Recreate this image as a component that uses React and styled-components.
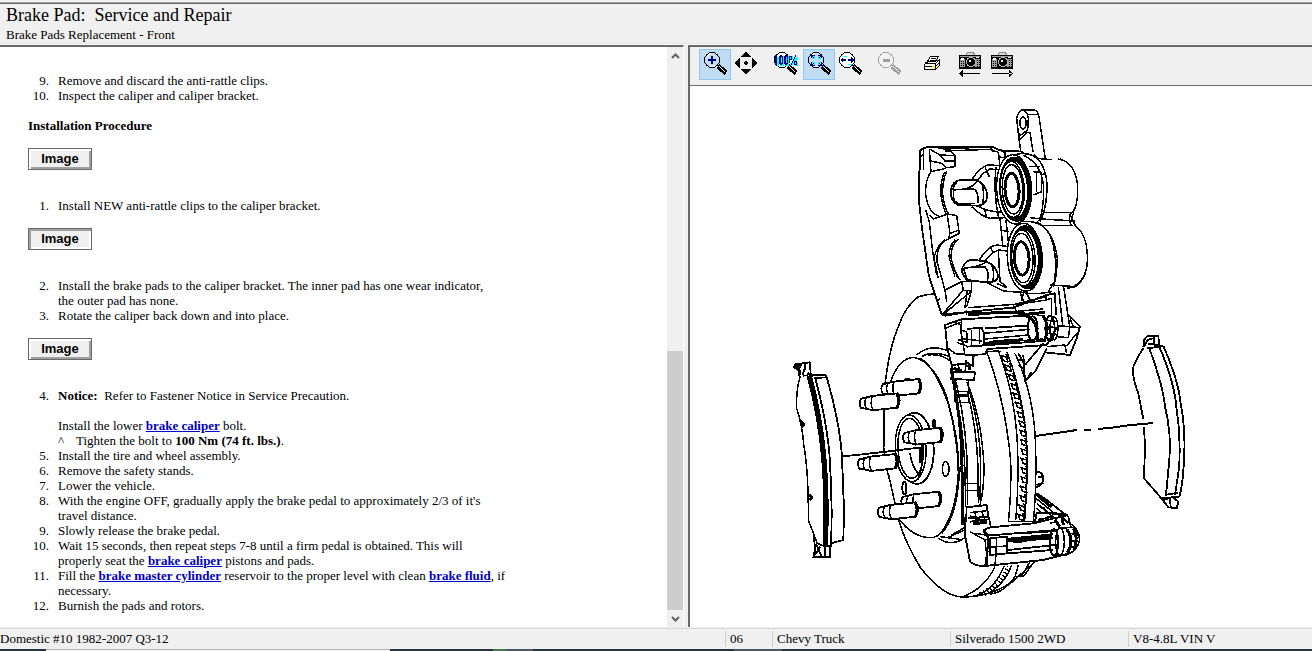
import styled, { createGlobalStyle } from "styled-components";

export default function App() {
  return (
    <Page>
      <GlobalStyle />
      <Header>
        <Title>Brake Pad:&nbsp; Service and Repair</Title>
        <Subtitle>Brake Pads Replacement - Front</Subtitle>
      </Header>

      <Panes>
        <TextPane>
          <Article>
            {procedure.map((block, index) => (
              <Block key={index} block={block} />
            ))}
          </Article>
          <ScrollBar>
            <ScrollButton type="button" aria-label="Scroll up">
              <Chevron viewBox="0 0 9 6">
                <path d="M1 5 4.500 1.500 8 5" />
              </Chevron>
            </ScrollButton>
            <Track>
              <Thumb />
            </Track>
            <ScrollButton type="button" aria-label="Scroll down">
              <Chevron viewBox="0 0 9 6">
                <path d="M1 1 4.500 4.500 8 1" />
              </Chevron>
            </ScrollButton>
          </ScrollBar>
        </TextPane>

        <ImagePane>
          <Toolbar />
          <Canvas>
            <BrakeDiagram />
          </Canvas>
        </ImagePane>
      </Panes>

      <StatusBar>
        <Status>Domestic #10 1982-2007 Q3-12</Status>
        <Status>06</Status>
        <Status>Chevy Truck</Status>
        <Status>Silverado 1500 2WD</Status>
        <Status>V8-4.8L VIN V</Status>
      </StatusBar>
      <Taskbar>
        <Task $w={46} $color="#22353f" />
        <Task $w={344} $color="#f0f0f0" $line />
        <Task $w={103} $color="#22353f" />
        <Task $w={14} $color="#41794b" />
        <Task $w={26} $color="#4a565e" />
        <Task $w={201} $color="#22353f" />
        <Task $w={48} $color="#4a565e" />
      </Taskbar>
    </Page>
  );
}

function Block({ block }) {
  if (block.type === "heading") return <Heading>{block.text}</Heading>;
  if (block.type === "image") {
    return (
      <ImageButton type="button" $pressed={block.pressed}>
        Image
      </ImageButton>
    );
  }
  return (
    <Steps>
      {block.items.map((item) => (
        <Step key={item.no}>
          <StepNumber>{item.no}.</StepNumber>
          <div>{item.body}</div>
        </Step>
      ))}
    </Steps>
  );
}

function Toolbar() {
  return (
    <Tools>
      <ToolGroup>
        <Tool type="button" aria-label="Zoom in" $active>
          <Magnifier x={13} tint="#c3dcf3">
            <path d="M9 11h8M13 7v8" stroke="#000080" strokeWidth="2" />
          </Magnifier>
        </Tool>
        <Tool type="button" aria-label="Pan">
          <Icon viewBox="0 0 32 31">
            <path d="M15 3l6 5H9zM15 25l6-5H9zM4 14l5-6v12zM26 14l-5-6v12zM14 12h2v1h1v2h-1v1h-2v-1h-1v-2h1z" />
          </Icon>
        </Tool>
      </ToolGroup>
      <ToolGroup>
        <Tool type="button" aria-label="Actual size">
          <Magnifier x={11}>
            <path
              d="M5 8h3v9H6zM9 7h4v10H9zM14 7h4v10h-4zM19 7h3v4h-3zM25 8h2v2l-5 6h-2zM24 13h3v4h-3z"
              fill="#00ffff"
            />
            <path
              fillRule="evenodd"
              fill="#000080"
              d="M3 8V7h1V6h2v10H4V8zM8 7h1V6h2v1h1v8h-1v1H9v-1H8zM9.500 8v6h1V8zM13 7h1V6h2v1h1v8h-1v1h-2v-1h-1zM14.500 8v6h1V8zM18 7h3v4h-3zM19 8v2h1V8zM24 6h1v2h-1v2h-1v2h-1v2h-1v2h-1v-2h1v-2h1v-2h1V8h1zM23 12h3v4h-3zM24 13v2h1v-2z"
            />
          </Magnifier>
        </Tool>
        <Tool type="button" aria-label="Fit to window" $active>
          <Magnifier x={13} tint="#c3dcf3">
            <path
              d="M9 9.500h2.500V7M15.500 7v2.500H18M9 13.500h2.500V16M18 13.500h-2.500V16"
              fill="none"
              stroke="#00ffff"
              strokeWidth="1"
            />
            <path
              d="M8.500 9V6.500h3M15 6.500h3.500V9M8.500 13v3.500h3M18.500 13v3.500H15M9 7l2 2M18 7l-2 2M9 16l2-2M18 16l-2-2"
              fill="none"
              stroke="#000080"
              strokeWidth="1"
            />
          </Magnifier>
        </Tool>
        <Tool type="button" aria-label="Fit width">
          <Magnifier x={12}>
            <path d="M8 7h4M13 15h4" stroke="#00ffff" strokeWidth="1" />
            <path
              d="M5 11l3-3v2h3v2H8v2zM19 11l-3-3v2h-3v2h3v2z"
              fill="#000080"
            />
          </Magnifier>
        </Tool>
      </ToolGroup>
      <ToolGroup>
        <Tool type="button" aria-label="Zoom out" disabled>
          <Magnifier x={11} color="#a0a0a0" tint="#f0f0f0">
            <path d="M8 11h7" stroke="#a0a0a0" strokeWidth="3" />
          </Magnifier>
        </Tool>
      </ToolGroup>
      <ToolGroup>
        <Tool type="button" aria-label="Print">
          <Icon viewBox="0 0 32 31">
            <path
              d="M9.500 14.500l4-2h8l3-2v6l-4 4h-11z"
              fill="#fff"
              stroke="#000"
            />
            <path
              d="M12.500 12.500l3-5h8l-3 5zM9.500 17.500h11l4-4M20.500 14.500v6M9.500 14.500h11l3-3"
              fill="#fff"
              stroke="#000"
            />
            <path d="M15.500 9.500h5M14.500 11.500h5" stroke="#000" />
            <path d="M17 17h3v2h-3z" fill="#f2e600" />
          </Icon>
        </Tool>
      </ToolGroup>
      <ToolGroup>
        <Tool type="button" aria-label="Previous image">
          <Camera>
            <path d="M5 24h20v1H5zM4 24.500l4-3.500v7z" />
          </Camera>
        </Tool>
        <Tool type="button" aria-label="Next image">
          <Camera>
            <path d="M5 24h20v1H5zM26 24.500l-4-3.500v7z" />
          </Camera>
        </Tool>
      </ToolGroup>
    </Tools>
  );
}

function Magnifier({ x, color = "#000", tint = "#fff", children }) {
  return (
    <Icon viewBox="0 0 32 31">
      <circle cx={x} cy="11" r="7.500" fill={tint} stroke={color} />
      <path
        d="M-5-3q1-3 4-3.500M4 5q-3 2-6 1"
        transform={`translate(${x} 11)`}
        fill="none"
        stroke="#fff"
      />
      <g transform={`translate(${x - 13} 0)`}>
        <path d="M19 17l8 7" stroke={color} strokeWidth="5" />
        <path d="M20 17l6 6" stroke="#f0f0f0" strokeWidth="1" />
      </g>
      {children}
    </Icon>
  );
}

function Camera({ children }) {
  return (
    <Icon viewBox="0 0 32 31">
      <path d="M11 6q0-3 4-3t5 3z" fill="#d8d8d8" stroke="#888" />
      <path d="M4 6h22v14H4z" />
      <path d="M5 7h20v1H5zM5 10h5v8H5zM20 10h5v8h-5z" fill="#a0a0a0" />
      <path
        d="M6.500 8v10M8.500 8v10M22.500 9v9M24.500 9v9"
        stroke="#000"
        strokeDasharray="1 1"
      />
      <circle cx="16" cy="13" r="5" fill="#b8b8b8" />
      <circle cx="16" cy="13" r="4" />
      <path d="M14 11h2v2h-2zM6 9h3v2H6zM21 8h3v1h-3z" fill="#fff" />
      {children}
    </Icon>
  );
}

const studs = [
  [110, 147],
  [45, 190],
  [175, 293],
  [40, 372],
  [170, 485],
  [100, 517],
];

// cooling vanes between the two rotor faces
const vanes = [
  [456, 50], [466, 78], [476, 106], [484, 134], [491, 162], [498, 190],
  [503, 218], [508, 246], [511, 274], [513, 302], [515, 330], [515, 358],
  [515, 386], [515, 414], [513, 442], [511, 470], [508, 498], [505, 526],
];

// each group is drawn at three times its size on the canvas
function BrakeDiagram() {
  return (
    <Diagram viewBox="690 86 622 541" role="img" aria-label="Front brake pads">
      {/* rotor rim */}
      <path d="M935 294Q926 294 918 297 905 307 899 325 888 350 884 395V447Q885 470 897 503L898 518Q904 540 920 567 942 596 962 597 990 597 1012 582L1036 561" />

      {/* hub */}
      <g transform="translate(850 340) scale(.3333)">
        <path d="M200 45Q240 8 300 35M215 50Q250 30 300 50M235 45Q270 40 300 62" />
        <path
          className="paper"
          d="M103 320V200L120 130Q145 55 190 52 250 62 290 170 325 300 325 400 318 520 275 575 262 592 245 593 190 595 145 535L115 400"
        />
        <path className="heavy" d="M210 55Q255 80 295 190 330 310 326 420 318 530 275 580" />
        <ellipse className="heavy" cx="197" cy="325" rx="54" ry="107" transform="rotate(-3 197 325)" />
        <ellipse className="paper" cx="182" cy="325" rx="46" ry="100" transform="rotate(-3 182 325)" />
        <ellipse cx="182" cy="325" rx="38" ry="90" transform="rotate(-3 182 325)" />
        <path d="M215 310Q225 370 205 415M180 340Q185 380 208 405" />
        <path className="bold" d="M212 322L213 370" />
        <ellipse cx="287" cy="387" rx="10" ry="22" />
        <ellipse className="heavy" cx="163" cy="445" rx="6" ry="19" />
        <ellipse className="heavy" cx="252" cy="250" rx="3" ry="12" />
        <ellipse className="heavy" cx="172" cy="119" rx="6" ry="3" />
        <path className="heavy" d="M-22 349L20 345 100 336 215 322" />
        {studs.map(([x, y]) => (
          <g key={`${x}-${y}`} transform={`translate(${x} ${y})`}>
            <path
              className="paper heavy"
              d="M-12-14Q-20-2-12 14L12 18 22 21 98 13Q110-10 98-30L20-22 5-18Z"
            />
            <path d="M5-18Q-6 0 5 16M22-22Q14 0 24 20M94-28Q104-8 94 12" />
          </g>
        ))}
      </g>

      {/* inner shield and rotor faces */}
      <g transform="translate(850 340) scale(.3333)">
        <path
          className="paper"
          d="M410 35Q465 180 482 360 485 460 475 545L550 545Q560 450 557 330 555 160 490 30Z"
        />
        <path d="M446 35Q498 170 503 330 506 450 497 540" />
        <path d="M470 33Q526 180 532 340 531 460 524 540" />
        {vanes.map(([x, y]) => (
          <path
            key={y}
            d={`M${x - 4} ${y - 4}l18 6 4 14-14-4-4-14M${x + 12} ${y - 8}l6 12`}
          />
        ))}
        <path className="bold" d="M303 85Q338 250 336 390L338 555" />
        <path d="M312 140Q346 280 346 450V500M318 125Q355 280 352 430V495" />
        <path d="M350 125Q395 230 402 380 402 450 390 495M352 155Q380 260 384 380L385 490M358 150Q392 270 392 380L390 480" />
        <path d="M320 165H356M320 187H360M346 430H385M346 452H385M316 125L318 165M345 500H385" />
      </g>

      {/* caliper plate */}
      <g transform="translate(890 95) scale(.3333)">
        <path
          className="paper"
          d="M90 168Q95 155 130 154L160 156V162L305 155 330 166 345 172 345 640 156 658 116 540 96 400 86 310Z"
        />
        <path className="heavy" d="M90 168Q95 156 130 155L160 156 305 155 330 166 432 172" />
        <path d="M165 168L300 163 325 172M300 155L310 172" />
        <path className="heavy" d="M90 165L86 310 96 400 116 540 155 658" />
        <path d="M100 160V225M98 180Q89 182 90 200V225M118 162L123 230Q105 255 107 300 115 355 150 365L172 358" />
        <path d="M123 230L160 222 168 218M170 228Q156 260 158 300 165 345 176 356M164 230Q150 260 153 300 160 345 170 358" />
        <path d="M120 163L150 180 195 182V215L168 218 155 205 122 198M150 180L165 198H195M130 156L180 165 195 182" />
        <path d="M107 345L118 380 128 470 140 540M118 360L130 372 172 357 200 362 208 415 175 432Q140 445 132 490M172 360L180 415 208 405M180 415L175 432" />
        <path d="M205 432Q182 450 183 490L203 550M196 434Q175 455 178 490L195 545M165 435Q138 460 141 500L165 585M130 480L145 550" />
      </g>

      {/* caliper lug */}
      <g transform="translate(890 95) scale(.3333)">
        <path
          className="paper"
          d="M392 168L385 115 380 70Q385 46 400 44L438 46Q447 55 450 85L466 192 430 195Z"
        />
        <path d="M400 44Q415 55 415 72L413 105 386 125M390 132L413 112 420 112 429 170M413 58H440M388 122L384 105" />
        <ellipse className="heavy" cx="399" cy="84" rx="9" ry="18" />
      </g>

      {/* piston bores */}
      <g transform="translate(890 95) scale(.3333)">
        <path
          className="blank"
          d="M370 180Q420 172 440 190H510Q555 205 563 270 565 330 548 352L555 392Q595 420 592 500 585 570 520 585L330 640V400L300 300Z"
        />
        <path d="M370 180Q415 168 440 190L485 194M510 192Q555 205 563 270 565 330 548 352M505 192L520 196M432 180Q478 220 470 300 466 350 450 380M400 180Q462 210 461 290 460 350 447 378" />
        <path d="M418 215H450M430 230L455 232 455 290 430 300M440 235V290M455 240L465 236M420 368L455 372 555 378M460 352H550M460 392H550M545 350Q532 370 545 392M552 350L545 370 556 392" />
        <path d="M555 392Q595 420 592 500 588 560 550 578M400 380Q455 375 480 420 505 480 493 560L475 590M440 380Q492 410 502 490 500 550 490 575" />
        <path d="M325 170L330 212M345 172L350 200M325 185L360 192M330 370L338 450M348 375L356 450M330 405L356 410" />
        <path d="M245 255Q270 215 295 210L340 212M262 258Q278 232 300 222L335 225M245 335Q275 365 300 370L345 368M262 332Q290 350 335 352M285 218L298 245M283 342L290 366M318 215Q310 290 325 365" />
        <path d="M262 505Q290 455 320 450L358 455M280 510Q295 475 325 465L352 468M300 455L310 475M325 465L330 560 350 575" />
        <path
          className="paper heavy"
          d="M182 290Q185 257 215 254L260 256Q290 268 292 305 288 330 265 332L205 330Q182 320 182 290Z"
        />
        <path d="M190 285L225 282Q250 275 262 258M190 285L192 320M225 282H250Q266 285 264 325M200 262Q192 270 188 285M275 262Q284 290 278 328M192 318L205 325H255" />
        <path
          className="paper heavy"
          d="M215 530Q218 500 245 494L290 500Q320 512 325 545 322 562 290 562L230 555Z"
        />
        <path d="M222 520L250 516Q278 510 290 500M250 516H285Q300 530 292 560M220 520L232 553M305 510Q315 530 308 560" />
        <g transform="rotate(-3 370 283)">
          <ellipse className="paper" cx="372" cy="283" rx="52" ry="104" />
          <ellipse className="ring" cx="377" cy="283" rx="42" ry="90" />
          <ellipse className="paper" cx="367" cy="283" rx="36" ry="84" />
          <ellipse cx="368" cy="283" rx="31" ry="74" />
          <ellipse className="bold" cx="366" cy="285" rx="21" ry="50" />
        </g>
        <g transform="rotate(-3 400 487)">
          <ellipse className="paper" cx="404" cy="487" rx="52" ry="102" />
          <ellipse className="ring" cx="409" cy="487" rx="42" ry="88" />
          <ellipse className="paper" cx="398" cy="489" rx="37" ry="84" />
          <ellipse cx="397" cy="489" rx="32" ry="74" />
          <ellipse className="bold" cx="395" cy="490" rx="22" ry="50" />
        </g>
      </g>

      {/* upper bracket */}
      <g transform="translate(890 265) scale(.3333)">
        <path
          className="blank"
          d="M165 180L215 163 410 152 500 150 535 150 570 185 560 215 540 270 465 262 435 320 405 350 400 270 290 250 255 270V345L190 345 172 250Z"
        />
        <path d="M165 75L215 50H245V78L160 148M215 50L220 75 160 145M165 75L170 110M215 75L245 78M185 0L210 45M150 100Q135 110 150 125" />
        <path className="heavy" d="M155 148L165 152 240 140 370 128 470 90 495 85 498 150" />
        <path d="M235 128L375 118 468 95M230 135L230 150M225 128L232 75M245 76L230 125M235 152L460 132M370 120L380 140M468 92V105L485 100V150M380 118L470 105" />
        <path className="bold" d="M235 146L370 142 410 148 465 142" />
        <path d="M290 52L340 78 390 82 400 108M388 80Q430 92 485 80M320 55L350 68M480 60L560 65M530 70Q575 65 590 10M520 60L540 190M505 65L518 180M400 85L395 108M410 85L420 105" />
        <path className="heavy" d="M535 150L570 185 560 220 540 270 465 262" />
        <path d="M540 185L568 188M530 243L560 205M500 182L540 185 535 218 500 215M525 240L530 265M540 160L550 185M470 245L525 240" />
        <path className="heavy" d="M190 345L185 300 172 250 165 180 215 163 410 152" />
        <path d="M165 190L212 172M215 165L212 195 225 270M190 170L212 180M212 195L230 200 232 232 205 225M200 232L235 245" />
        <path className="heavy" d="M230 192L275 188Q288 210 280 240M285 190L410 182M232 245L460 228M230 270L285 268 292 252 470 240 500 190" />
        <path d="M280 205L420 193M285 222L415 210M300 240L350 236M355 230L460 222M245 195V240M268 190V238M205 225L225 222 275 228M310 228L400 222" />
        <path className="bold" d="M405 152Q445 160 442 228M285 235L380 228M460 152Q482 190 462 230" />
        <ellipse className="heavy" cx="428" cy="190" rx="15" ry="36" />
        <ellipse className="heavy" cx="480" cy="190" rx="14" ry="38" />
        <ellipse cx="492" cy="190" rx="12" ry="34" />
        <path d="M440 152H465M440 228H465M470 165L500 170M470 185L504 188M470 205L500 208M475 220L495 225" />
        <path className="heavy" d="M190 265L255 272M185 300L235 295 252 305M190 320L255 322 252 345 188 342M205 300L208 322M228 285L226 322M250 272V300" />
        <path className="bold" d="M190 310L215 318M235 298L240 315M180 340L200 345" />
        <path d="M195 345V410M235 345V410M195 380H235M195 395H235M175 250L195 265" />
        <path className="heavy" d="M400 270L405 350 435 320 470 250M405 300L460 235M385 265L405 300M380 285H400M385 300L405 315M410 345L425 320" />
      </g>

      {/* lower bracket and bottom of the rotor */}
      <g transform="translate(870 470) scale(.3333)">
        <path d="M205 205Q250 235 295 195M235 202L288 178M245 195L285 172M210 200L270 208" />
        <path
          className="paper"
          d="M290 112L350 105 358 150 362 172 490 160 560 130 600 160Q632 180 628 215 620 240 600 250L520 270 375 285 345 288Q320 290 300 275L285 195Z"
        />
        <path className="heavy" d="M285 140V195L300 275Q320 290 345 288L520 270 600 250M290 112L350 105 355 140 295 145M300 155L358 148 362 170" />
        <path d="M300 128L350 122M315 130L320 150M335 126L345 148M300 185L345 210 360 205M345 210L350 255 345 288M315 190L345 195" />
        <path className="heavy" d="M340 180L362 172 490 160 595 135M340 180L350 197 560 180M360 205L410 200 412 250 360 255ZM410 215L550 205M415 240L555 225M415 250L550 240M355 200L350 285" />
        <path d="M375 285L378 255M380 202L378 252M362 232L410 228M420 205L550 192M430 218L470 214M460 190L555 184M350 225H362M350 245H362" />
        <path className="bold" d="M340 180L355 200M300 140L330 148M310 160L350 158M412 210L545 198" />
        <ellipse className="heavy" cx="552" cy="217" rx="13" ry="40" />
        <ellipse cx="570" cy="215" rx="13" ry="42" />
        <path className="bold" d="M590 178Q615 210 592 248M610 176Q626 200 612 240" />
        <path d="M565 175L610 172Q632 190 628 215 620 240 600 250M600 190L625 195M602 212L628 214M600 230L622 232M555 255L590 255" />
        <path className="heavy" d="M500 5Q520 5 520 30 515 48 498 52M500 70L530 90 595 140 603 172M500 100L560 150M495 155L500 130 560 130 590 135M505 20H520M500 45L520 38" />
        <path className="bold" d="M498 72L545 112M555 150L570 170M575 135L580 165" />
        <path d="M498 85L560 135M520 110L530 130M540 160L560 155M505 148L545 142M500 115L515 130M575 145L595 160" />
        <path d="M275 382Q345 355 375 290M310 380Q375 360 402 288M345 375Q405 345 425 285M360 372Q400 370 435 320L460 320 495 272M435 320L445 285M455 318L480 275" />
        <path className="dense" d="M330 372Q390 350 416 290" />
      </g>

      {/* outer pad */}
      <g transform="translate(780 350) scale(.3333)">
        <path className="heavy" d="M60 85L55 60 42 52 45 43 90 37 92 72M42 52L58 48 60 75M65 42L55 58M75 50L68 75M48 44L52 60M74 40V60" />
        <path d="M60 82Q48 120 50 175 66 220 72 290 86 370 85 510L112 580 130 588M68 78L85 75" />
        <path className="ring" d="M88 78Q120 200 130 310 142 430 136 585" />
        <path className="heavy" d="M105 82Q145 230 150 340 158 470 153 585M100 75L138 74M105 84L140 82M138 74Q180 220 186 320L192 480 190 570 152 580M130 588H155" />
        <path className="heavy" d="M102 555L105 600 100 622H150V590M108 580L125 620M120 590L105 615M135 590V620" />
        <path className="bold" d="M62 215L72 222 64 230M86 435L96 442 88 450M82 70L100 78" />
      </g>

      {/* inner pad */}
      <g transform="translate(1110 320) scale(.3333)">
        <path className="heavy" d="M100 85Q70 130 68 150 72 190 85 220L100 298M102 320L105 380 102 475 150 530" />
        <path className="heavy" d="M118 85Q160 200 165 260 185 340 178 420L168 525M148 80Q195 190 200 270 212 340 208 440L195 525M160 78Q205 180 212 250 228 330 222 420 218 500 208 530" />
        <path className="heavy" d="M100 82L102 60 112 48H145L148 78 160 78M112 85L148 80M102 80L112 60 130 55M132 50V75M115 72L145 75M150 530L175 562 200 565 205 545 185 530M165 525L205 518M155 535L208 530M180 535L182 560M160 540L175 535" />
      </g>

      <path
        className="axis"
        d="M1036 436L1077 430M1084 430H1091M1098 429L1118 427 1122 426 1153 423"
      />
    </Diagram>
  );
}

const GlobalStyle = createGlobalStyle`
  body {
    margin: 0;
    background: #f0f0f0;
    color: #000;
    font-family: "Liberation Serif", "Times New Roman", serif;
    font-size: 13px;
    line-height: 15px;
  }

  button {
    font: inherit;
    color: inherit;
    padding: 0;
  }

  a {
    color: #0000c8;
    font-weight: 700;
  }
`;

const Page = styled.div`
  display: flex;
  flex-direction: column;
  min-height: 100vh;
  padding-top: 2px;
  box-sizing: border-box;
`;

const Header = styled.header`
  border-top: 1px solid #a0a0a0;
  border-bottom: 1px solid #e3e3e3;
  box-shadow: inset 0 1px #696969, 0 1px #fff;
  padding: 2px 6px 0;
  margin-bottom: 1px;
`;

const Title = styled.h1`
  margin: 0;
  font-size: 18px;
  font-weight: 400;
  line-height: 21px;
`;

const Subtitle = styled.h2`
  margin: 0;
  font-size: 13px;
  font-weight: 400;
  line-height: 17px;
`;

const Panes = styled.main`
  flex: 1;
  display: grid;
  grid-template-columns: 43fr 39fr;
`;

const TextPane = styled.section`
  display: flex;
  min-width: 0;
  margin-right: 4px;
  border-top: 2px solid #696969;
  border-right: 1px solid #fff;
  background: #fff;
`;

const Article = styled.article`
  flex: 1;
  padding: 26px 20px 8px 28px;
`;

const Heading = styled.h3`
  margin: 15px 0;
  font-size: 13px;
  line-height: 15px;
`;

const ImageButton = styled.button`
  display: block;
  width: 64px;
  height: 22px;
  margin: 15px 0 28px;
  border: 1px solid #696969;
  background: #f0f0f0;
  box-shadow: ${({ $pressed }) =>
    $pressed
      ? "inset 2px 2px #a0a0a0, inset -2px -2px #fff"
      : "inset 2px 2px #fff, inset -2px -2px #a0a0a0"};
  font-family: "Liberation Sans", Arial, sans-serif;
  font-size: 13px;
  font-weight: 700;
  line-height: 20px;
`;

const Steps = styled.ol`
  list-style: none;
  margin: 0;
  padding: 0;
`;

const Step = styled.li`
  display: grid;
  grid-template-columns: 21px minmax(0, 448px);
  column-gap: 9px;
`;

const StepNumber = styled.span`
  text-align: right;
`;

const SubStep = styled.div`
  margin-top: 15px;
`;

const Torque = styled.div`
  display: grid;
  grid-template-columns: 18px 1fr;
`;

const ScrollBar = styled.div`
  display: flex;
  flex-direction: column;
  width: 16px;
  background: #f0f0f0;
`;

const ScrollButton = styled.button`
  display: flex;
  align-items: center;
  justify-content: center;
  height: 17px;
  border: none;
  background: none;
`;

const Chevron = styled.svg`
  width: 9px;
  height: 6px;
  fill: none;
  stroke: #606060;
  stroke-width: 2;
`;

const Track = styled.div`
  flex: 1;
  display: flex;
  align-items: flex-end;
`;

const Thumb = styled.div`
  width: 100%;
  height: 47.5%;
  background: #cdcdcd;
`;

const ImagePane = styled.section`
  display: flex;
  flex-direction: column;
  min-width: 0;
  border-top: 2px solid #696969;
  border-left: 2px solid #696969;
  background: #fff;
`;

const Tools = styled.div`
  display: flex;
  gap: 8px;
  padding: 2px 9px 5px;
  border-bottom: 1px solid #696969;
  background: #f0f0f0;
`;

const ToolGroup = styled.div`
  display: flex;
`;

const Tool = styled.button`
  width: 32px;
  height: 31px;
  border: none;
  background: ${({ $active }) => ($active ? "#c0dcf3" : "none")};
  box-shadow: ${({ $active }) => ($active ? "inset 0 0 0 1px #90c8f6" : "none")};
`;

const Icon = styled.svg`
  display: block;
  width: 32px;
  height: 31px;
  shape-rendering: crispEdges;
`;

const Canvas = styled.div`
  flex: 1;
  display: flex;
`;

const Diagram = styled.svg`
  flex: 1;
  width: 100%;
  fill: none;
  stroke: #000;
  stroke-width: 1.6;
  stroke-linejoin: round;
  shape-rendering: crispEdges;

  g {
    stroke-width: 4.5;
  }

  .paper {
    fill: #fff;
  }

  .blank {
    fill: #fff;
    stroke: none;
  }

  .heavy {
    stroke-width: 5.5;
  }

  .bold {
    stroke-width: 9;
  }

  .ring {
    stroke-width: 16;
  }

  .dense {
    stroke-width: 14;
    stroke-dasharray: 4 7;
  }

  .axis {
    stroke-width: 2;
  }
`;

const StatusBar = styled.footer`
  display: grid;
  grid-template-columns: 725fr 47fr 178fr 178fr 184fr;
  padding: 2px 0;
  margin-top: 1px;
  border-top: 1px solid #d7d7d7;
`;

const Status = styled.div`
  padding-left: 4px;
  border-left: 1px solid #d0d0d0;
  line-height: 16px;
  white-space: nowrap;

  &:first-child {
    padding-left: 0;
    border-left: none;
  }
`;

const Taskbar = styled.div`
  display: flex;
  height: 2px;
  background: #22353f;
`;

const Task = styled.div`
  width: ${({ $w }) => $w}px;
  background: ${({ $color }) => $color};
  box-shadow: ${({ $line }) => ($line ? "inset 0 1px #b4b4b4" : "none")};
`;

const procedure = [
  {
    type: "steps",
    items: [
      { no: 9, body: "Remove and discard the anti-rattle clips." },
      { no: 10, body: "Inspect the caliper and caliper bracket." },
    ],
  },
  { type: "heading", text: "Installation Procedure" },
  { type: "image" },
  {
    type: "steps",
    items: [
      { no: 1, body: "Install NEW anti-rattle clips to the caliper bracket." },
    ],
  },
  { type: "image", pressed: true },
  {
    type: "steps",
    items: [
      {
        no: 2,
        body: (
          <>
            Install the brake pads to the caliper bracket. The inner pad has one
            wear indicator,
            <br />
            the outer pad has none.
          </>
        ),
      },
      { no: 3, body: "Rotate the caliper back down and into place." },
    ],
  },
  { type: "image" },
  {
    type: "steps",
    items: [
      {
        no: 4,
        body: (
          <>
            <b>Notice:</b>&nbsp; Refer to Fastener Notice in Service Precaution.
            <SubStep>
              Install the lower <a href="#caliper">brake caliper</a> bolt.
            </SubStep>
            <Torque>
              <span>^</span>
              <span>
                Tighten the bolt to <b>100 Nm (74 ft. lbs.)</b>.
              </span>
            </Torque>
          </>
        ),
      },
      { no: 5, body: "Install the tire and wheel assembly." },
      { no: 6, body: "Remove the safety stands." },
      { no: 7, body: "Lower the vehicle." },
      {
        no: 8,
        body: "With the engine OFF, gradually apply the brake pedal to approximately 2/3 of it's travel distance.",
      },
      { no: 9, body: "Slowly release the brake pedal." },
      {
        no: 10,
        body: (
          <>
            Wait 15 seconds, then repeat steps 7-8 until a firm pedal is
            obtained. This will properly seat the{" "}
            <a href="#caliper">brake caliper</a> pistons and pads.
          </>
        ),
      },
      {
        no: 11,
        body: (
          <>
            Fill the <a href="#master-cylinder">brake master cylinder</a>{" "}
            reservoir to the proper level with clean{" "}
            <a href="#fluid">brake fluid</a>, if necessary.
          </>
        ),
      },
      { no: 12, body: "Burnish the pads and rotors." },
    ],
  },
];
